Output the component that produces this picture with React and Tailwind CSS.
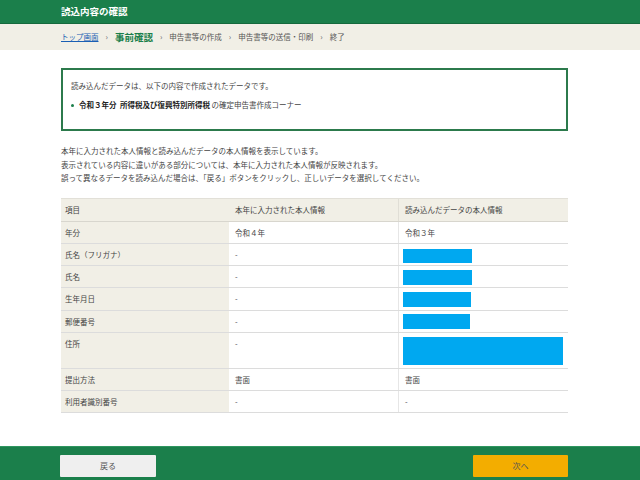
const rows = [
  { label: '年分', current: '令和４年', loaded: '令和３年', h: 'h-[22px]' },
  { label: '氏名（フリガナ）', current: '-', bar: 'w-[69px] h-[14px] mt-[5px]', h: 'h-[22px]' },
  { label: '氏名', current: '-', bar: 'w-[69px] h-[15px] mt-[4px]', h: 'h-[22px]' },
  { label: '生年月日', current: '-', bar: 'w-[68px] h-[15px] mt-[4px]', h: 'h-[23px]' },
  { label: '郵便番号', current: '-', bar: 'w-[67px] h-[15px] mt-[3px]', h: 'h-[22px]' },
  { label: '住所', current: '-', bar: 'w-[160px] h-[28px] mt-[4px]', h: 'h-[36px]' },
  { label: '提出方法', current: '書面', loaded: '書面', h: 'h-[22px]' },
  { label: '利用者識別番号', current: '-', loaded: '-', h: 'h-[22px]' },
];

const Sep = () => <span className="text-[#666] text-[8px] px-[7px]">›</span>;

export default function App() {
  return (
    <div
      className="w-[640px] h-[480px] flex flex-col bg-white text-[#444] overflow-hidden"
      style={{ fontFamily: '"Noto Sans CJK JP", "Noto Sans", sans-serif' }}
    >
      {/* title bar */}
      <header className="h-[24px] bg-[#1b7f4b] border-b border-[#15693d] flex items-center pl-[61px]">
        <h1 className="text-white font-bold text-[9.5px] leading-none">読込内容の確認</h1>
      </header>

      {/* breadcrumb */}
      <nav className="h-[26px] bg-[#f1efe6] flex items-center pl-[61px] text-[7.5px] text-[#555]">
        <span className="text-[#1a5fb4] underline">トップ画面</span>
        <Sep />
        <span className="text-[#1b7f4b] font-bold text-[9.5px]">事前確認</span>
        <Sep />
        <span>申告書等の作成</span>
        <Sep />
        <span>申告書等の送信・印刷</span>
        <Sep />
        <span>終了</span>
      </nav>

      <main className="ml-[61px] w-[507px] pt-[18px]">
        <section className="h-[63px] border-2 border-[#2c7a4c] px-[8px] pt-[11px] text-[7.5px] leading-[10px]">
          <p>読み込んだデータは、以下の内容で作成されたデータです。</p>
          <p className="mt-[9px] flex items-center">
            <span className="w-[3px] h-[3px] rounded-full bg-[#1b7f4b] mr-[5px]" />
            <span className="font-bold text-[#222]">令和３年分&nbsp;&nbsp;所得税及び復興特別所得税</span>
            <span>&nbsp;の確定申告書作成コーナー</span>
          </p>
        </section>

        <div className="mt-[13px] text-[7.5px] leading-[13.5px]">
          <p>本年に入力された本人情報と読み込んだデータの本人情報を表示しています。</p>
          <p>表示されている内容に違いがある部分については、本年に入力された本人情報が反映されます。</p>
          <p>誤って異なるデータを読み込んだ場合は、「戻る」ボタンをクリックし、正しいデータを選択してください。</p>
        </div>

        <div className="mt-[13px] text-[7.5px] leading-[10px] border-t border-[#e2e0d8]">
          <div className="grid grid-cols-[168px_169px_170px] h-[23px] bg-[#f1efe6] border-b border-[#d8d6ce]">
            <div className="px-[4px] flex items-center">項目</div>
            <div className="px-[6px] flex items-center">本年に入力された本人情報</div>
            <div className="px-[6px] flex items-center border-l border-[#e0ded6]">読み込んだデータの本人情報</div>
          </div>
          {rows.map((r) => (
            <div key={r.label} className={`grid grid-cols-[168px_169px_170px] border-b border-[#dcdcdc] ${r.h}`}>
              <div className="bg-[#f1efe6] px-[4px] pt-[6px]">{r.label}</div>
              <div className="px-[6px] pt-[6px]">{r.current}</div>
              <div className="border-l border-[#e6e6e6] pl-[4px]">
                {r.bar ? (
                  <div className={`bg-[#00a8f0] ${r.bar}`} />
                ) : (
                  <div className="pt-[6px] pl-[2px]">{r.loaded}</div>
                )}
              </div>
            </div>
          ))}
        </div>
      </main>

      <footer className="mt-auto h-[34px] bg-[#1b7f4b] border-t border-[#2f9660] flex items-start justify-between pl-[60px] pr-[72px] pt-[8px]">
        <button className="w-[96px] h-[22px] bg-[#efefef] text-[#555] text-[8px] rounded-[1px]">戻る</button>
        <button className="w-[95px] h-[22px] bg-[#f3ad00] text-[#555] text-[8px] rounded-[1px]">次へ</button>
      </footer>
    </div>
  );
}
